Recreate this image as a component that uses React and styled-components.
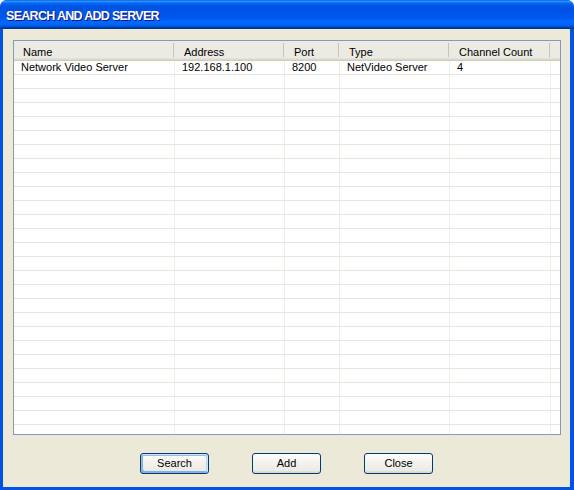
import React from 'react'
import styled, {createGlobalStyle} from 'styled-components'

const GlobalStyle = createGlobalStyle`
  html, body {
    margin: 0;
    padding: 0;
    background: #ffffff;
  }
  * {
    box-sizing: border-box;
  }
`

const columns = [
  {key: 'name', title: 'Name', width: 161},
  {key: 'address', title: 'Address', width: 110},
  {key: 'port', title: 'Port', width: 55},
  {key: 'type', title: 'Type', width: 110},
  {key: 'channels', title: 'Channel Count', width: 101},
]

const servers = [
  {name: 'Network Video Server', address: '192.168.1.100', port: '8200', type: 'NetVideo Server', channels: '4'},
]

const EMPTY_ROWS = 27

function App() {
  const rows = [...servers]
  while (rows.length < EMPTY_ROWS) rows.push(null)

  return (
    <>
      <GlobalStyle />
      <Window>
        <TitleBar>
          <Title>SEARCH AND ADD SERVER</Title>
        </TitleBar>
        <Client>
          <ListView>
            <HeaderRow>
              {columns.map((col) => (
                <HeaderCell key={col.key} $width={col.width}>{col.title}</HeaderCell>
              ))}
              <HeaderFiller />
            </HeaderRow>
            <Body>
              {rows.map((row, i) => (
                <Row key={i}>
                  {columns.map((col) => (
                    <Cell key={col.key} $width={col.width}>{row ? row[col.key] : ''}</Cell>
                  ))}
                  <Filler />
                </Row>
              ))}
            </Body>
          </ListView>
          <ButtonBar>
            <Button $default>Search</Button>
            <Button>Add</Button>
            <Button>Close</Button>
          </ButtonBar>
        </Client>
      </Window>
    </>
  )
}

const Window = styled.div`
  width: 574px;
  height: 490px;
  display: flex;
  flex-direction: column;
  background: #0054e3;
  border-radius: 7px 7px 0 0;
  overflow: hidden;
`

const TitleBar = styled.div`
  height: 29px;
  flex: none;
  display: flex;
  align-items: center;
  padding: 2px 0 0 6px;
  background: linear-gradient(
    to bottom,
    #0058ee 0%,
    #3593ff 4%,
    #288eff 6%,
    #127dff 8%,
    #036ffc 10%,
    #0262ee 14%,
    #0057e5 20%,
    #0054e3 24%,
    #0055eb 56%,
    #005bf5 66%,
    #026afe 76%,
    #0062ef 86%,
    #0052d6 92%,
    #0040ab 94%,
    #003092 100%
  );
`

const Title = styled.span`
  font-family: "Liberation Sans", Arial, sans-serif;
  font-weight: bold;
  font-size: 12.5px;
  letter-spacing: -0.7px;
  color: #ffffff;
  text-shadow: 1px 1px #0f1089;
`

const Client = styled.div`
  flex: 1;
  display: flex;
  flex-direction: column;
  margin: 0 4px 3px 3px;
  padding: 11px 9px 0 10px;
  background: #ece9d8;
`

const ListView = styled.div`
  height: 395px;
  flex: none;
  display: flex;
  flex-direction: column;
  background: #ffffff;
  border: 1px solid #7f9db9;
  overflow: hidden;
  font-family: "Liberation Sans", Arial, sans-serif;
  font-size: 11px;
  color: #000000;
`

const HeaderRow = styled.div`
  height: 20px;
  flex: none;
  display: flex;
  background: #ebeae3;
  box-shadow: inset 0 -1px #d0cdbf, inset 0 -2px #dcd9cc, inset 0 -3px #e4e2d8;
`

const HeaderCell = styled.div`
  position: relative;
  width: ${(p) => p.$width}px;
  flex: none;
  padding: 2px 0 0 9px;
  display: flex;
  align-items: center;
  white-space: nowrap;

  &::after {
    content: '';
    position: absolute;
    right: 1px;
    top: 2px;
    bottom: 4px;
    width: 1px;
    background: #c7c5b4;
  }
`

const HeaderFiller = styled.div`
  flex: 1;
`

const Body = styled.div`
  flex: 1;
  overflow: hidden;
`

const Row = styled.div`
  height: 14px;
  display: flex;
  border-bottom: 1px solid #e6e5dd;
`

const Cell = styled.div`
  width: ${(p) => p.$width}px;
  flex: none;
  padding-left: 7px;
  line-height: 13px;
  white-space: nowrap;
  overflow: hidden;
  border-right: 1px solid #efeee8;
`

const Filler = styled.div`
  flex: 1;
`

const ButtonBar = styled.div`
  display: flex;
  justify-content: center;
  gap: 43px;
  padding-top: 18px;
  padding-right: 1px;
`

const Button = styled.button`
  width: 69px;
  height: 21px;
  padding: 0 0 1px;
  border: 1px solid #003c74;
  border-radius: 3px;
  background: linear-gradient(180deg, #ffffff 0%, #f4f3ee 40%, #ecebe6 86%, #d6d0c5 100%);
  font-family: "Liberation Sans", Arial, sans-serif;
  font-size: 11px;
  color: #000000;
  box-shadow: ${(p) =>
    p.$default
      ? 'inset -1px 1px #cee7ff, inset 1px 2px #98b8ea, inset -2px 2px #bcd4f6, inset 1px -1px #89ade4, inset 2px -2px #89ade4'
      : 'none'};
`

export default App
